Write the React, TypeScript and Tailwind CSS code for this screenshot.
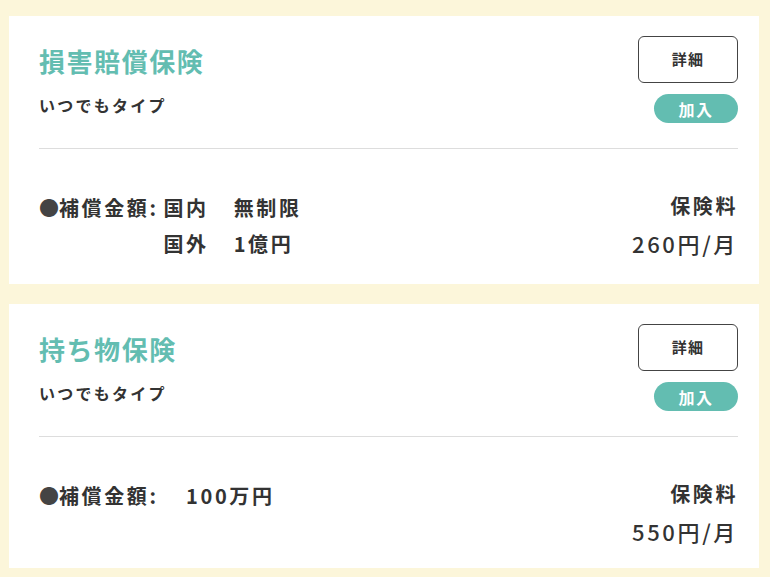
const font = { fontFamily: '"Noto Sans CJK JP", "Noto Sans", sans-serif' };

interface Plan {
  title: string;
  rows: { label: string; sub?: string; value: string }[];
  price: string;
  pb: string;
}

const plans: Plan[] = [
  {
    title: "損害賠償保険",
    rows: [
      { label: "●補償金額:", sub: "国内", value: "無制限" },
      { label: "", sub: "国外", value: "1億円" },
    ],
    price: "260円/月",
    pb: "pb-[22px]",
  },
  {
    title: "持ち物保険",
    rows: [{ label: "●補償金額:", value: "　100万円" }],
    price: "550円/月",
    pb: "pb-[18px]",
  },
];

function PlanCard({ plan }: { plan: Plan }) {
  return (
    <div className={`bg-white ml-[9px] w-[750px] pl-[30px] pr-[21px] pt-[20px] ${plan.pb}`}>
      {/* header */}
      <div className="flex justify-between items-start">
        <div className="pt-[7px]">
          <h2 className="text-[26px] leading-[36px] font-bold tracking-[0.06em] text-[#63bdb1]">
            {plan.title}
          </h2>
          <p className="mt-[14px] text-[16px] leading-[24px] font-bold tracking-[0.14em] text-[#333]">
            いつでもタイプ
          </p>
        </div>
        <div className="flex flex-col items-end gap-[11px]">
          <button className="w-[100px] h-[47px] border border-[#444] rounded-[6px] bg-white text-[15px] font-bold tracking-[0.08em] text-[#333] flex items-center justify-center">
            詳細
          </button>
          <span className="w-[84px] h-[29px] rounded-full bg-[#63bdb1] text-white text-[16px] font-bold tracking-[0.1em] flex items-center justify-center">
            加入
          </span>
        </div>
      </div>

      <div className="mt-[25px] border-t border-[#dddddd]" />

      {/* body */}
      <div className="pt-[39px] flex justify-between items-start text-[#333] font-bold">
        <div className="mt-[2px] grid grid-cols-[auto_auto_auto] text-[20px] leading-[36px] tracking-[0.13em]">
          {plan.rows.map((r, i) => (
            <div key={i} className="contents">
              <span className="flex">
                {r.label && (
                  <>
                    <span className="text-[#444] tracking-normal">●</span>
                    <span>{r.label.slice(1)}</span>
                  </>
                )}
              </span>
              <span className="pl-[5px]">{r.sub ?? ""}</span>
              <span className={r.sub ? "pl-[25px]" : ""}>{r.value}</span>
            </div>
          ))}
        </div>
        <div className="flex flex-col items-end">
          <span className="text-[20px] leading-[36px] tracking-[0.13em]">保険料</span>
          <span className="text-[22px] leading-[38px] font-medium tracking-[0.12em]">{plan.price}</span>
        </div>
      </div>
    </div>
  );
}

export default function App() {
  return (
    <div className="w-[770px] h-[577px] bg-[#fcf6da] pt-[16px] flex flex-col gap-[20px]" style={font}>
      {plans.map((p, i) => (
        <PlanCard key={i} plan={p} />
      ))}
    </div>
  );
}
